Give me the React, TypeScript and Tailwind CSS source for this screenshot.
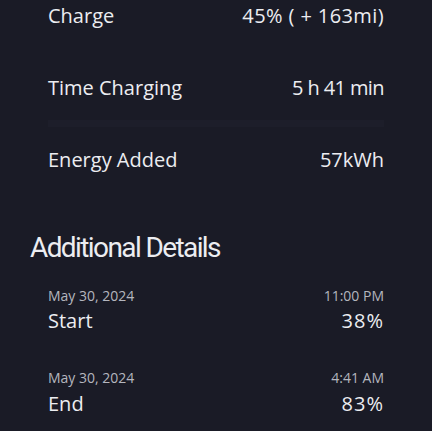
export default function App() {
  const font = { fontFamily: '"Open Sans", "Noto Sans", sans-serif' };
  return (
    <div className="min-h-[431px] w-full bg-[#1a1b26] text-[#ecedf1] overflow-hidden" style={font}>
      <div className="px-12 pt-[4px]">
        <div className="flex justify-between items-center h-6 text-[20px]">
          <span>Charge</span>
          <span className="tracking-[0.4px]">45% ( + 163mi)</span>
        </div>
        <div className="flex justify-between items-center h-6 text-[20px] mt-[48px]">
          <span>Time Charging</span>
          <span className="tracking-[-0.6px]">5 h 41 min</span>
        </div>
        <div className="h-[7px] bg-[#1d1e2a] mt-[20px]" />
        <div className="flex justify-between items-center h-6 text-[20px] mt-[21px]">
          <span>Energy Added</span>
          <span>57kWh</span>
        </div>
      </div>
      <h2
        className="pl-[30px] mt-[59px] h-[34px] leading-[34px] text-[28px] tracking-[-1.6px]"
        style={{ fontFamily: '"Roboto", sans-serif' }}
      >
        Additional Details
      </h2>
      <div className="px-12 mt-[22px]">
        <div>
          <div className="flex justify-between items-center h-4 text-[14px] text-[#b4b6be]">
            <span>May 30, 2024</span>
            <span>11:00 PM</span>
          </div>
          <div className="flex justify-between items-center h-6 text-[20px] mt-[6px]">
            <span>Start</span>
            <span className="tracking-[1px]">38%</span>
          </div>
        </div>
        <div className="mt-[36px]">
          <div className="flex justify-between items-center h-4 text-[14px] text-[#b4b6be]">
            <span>May 30, 2024</span>
            <span>4:41 AM</span>
          </div>
          <div className="flex justify-between items-center h-6 text-[20px] mt-[7px]">
            <span>End</span>
            <span className="tracking-[1px]">83%</span>
          </div>
        </div>
      </div>
    </div>
  );
}
